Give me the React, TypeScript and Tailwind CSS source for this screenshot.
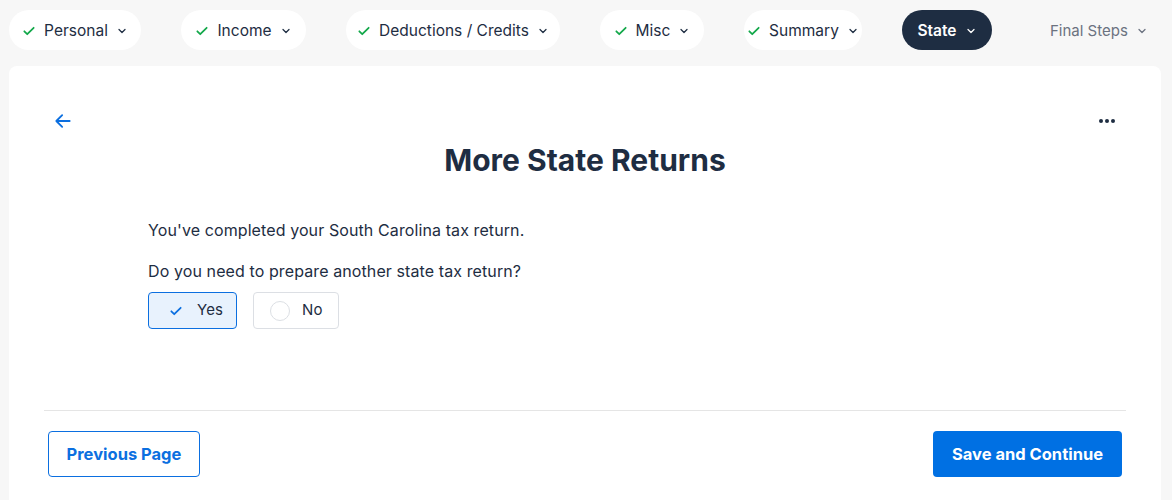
import React from "react";

const Check = ({ className = "" }: { className?: string }) => (
  <svg className={className} width="14" height="14" viewBox="0 0 24 24" fill="none" stroke="currentColor" strokeWidth="3" strokeLinecap="round" strokeLinejoin="round">
    <path d="M4 12.5l5 5L20 6.5" />
  </svg>
);

const Chevron = ({ className = "" }: { className?: string }) => (
  <svg className={className} width="12" height="12" viewBox="0 0 24 24" fill="none" stroke="currentColor" strokeWidth="2.5" strokeLinecap="round" strokeLinejoin="round">
    <path d="M6 9l6 6 6-6" />
  </svg>
);

const Tab = ({ label, w }: { label: string; w: string }) => (
  <div className={`flex items-center justify-center shrink-0 whitespace-nowrap h-10 pt-px rounded-full bg-white text-[15.5px] text-[#1e2d42] gap-2 ${w}`}>
    <Check className="text-[#13a84a]" />
    <span>{label}</span>
    <Chevron className="text-[#1e2d42]" />
  </div>
);

export default function App() {
  return (
    <div className="w-[1172px] h-[500px] bg-[#f7f7f7] overflow-hidden" style={{ fontFamily: "Inter, 'Noto Sans', sans-serif" }}>
      <div className="flex items-center pl-[9px] pt-[10px] gap-10 whitespace-nowrap">
        <Tab label="Personal" w="w-[132px]" />
        <Tab label="Income" w="w-[125px]" />
        <Tab label="Deductions / Credits" w="w-[214px]" />
        <Tab label="Misc" w="w-[104px]" />
        <Tab label="Summary" w="w-[118px]" />
        <div className="flex items-center justify-center shrink-0 w-[90px] h-10 pt-px rounded-full bg-[#1e2d42] text-white text-[15.5px] font-semibold gap-2">
          <span>State</span>
          <Chevron className="text-white" />
        </div>
        <div className="flex items-center shrink-0 gap-2 pt-0.5 text-[15px] text-[#6b7280] ml-[18px]">
          <span>Final Steps</span>
          <Chevron className="text-[#6b7280]" />
        </div>
      </div>
      <div className="mt-4 ml-[9px] w-[1152px] h-[440px] bg-white rounded-t-lg px-[35px] pt-[45px]">
        <div className="flex items-center justify-between px-[9px] h-5">
          <svg width="20" height="20" viewBox="0 0 24 24" fill="none" stroke="#0b6fe0" strokeWidth="2.2" strokeLinecap="round" strokeLinejoin="round">
            <path d="M20 12H4M11 5l-7 7 7 7" />
          </svg>
          <svg width="20" height="20" viewBox="0 0 20 20" fill="#1e2d42">
            <circle cx="4" cy="10" r="2" />
            <circle cx="10" cy="10" r="2" />
            <circle cx="16" cy="10" r="2" />
          </svg>
        </div>
        <h1 className="text-center text-[30px] font-bold text-[#1e2d42] mt-[9px] leading-[40px]">More State Returns</h1>
        <div className="pl-[104px] mt-[40px] text-[16px] tracking-[0.1px] text-[#1e2d42]">
          <p className="leading-5">You've completed your South Carolina tax return.</p>
          <p className="leading-5 mt-[21px]">Do you need to prepare another state tax return?</p>
          <div className="flex gap-4 mt-[11px]">
            <div className="flex items-center gap-[14px] h-[37px] w-[89px] pl-5 rounded border border-[#0b6fe0] bg-[#e8f2fd] text-[#1e2d42] text-[15px]">
              <Check className="text-[#0b6fe0]" />
              <span>Yes</span>
            </div>
            <div className="flex items-center gap-[12px] h-[37px] w-[86px] pl-4 rounded border border-[#dcdfe4] bg-white text-[#1e2d42] text-[15px]">
              <span className="w-5 h-5 rounded-full border border-[#dcdfe4]" />
              <span>No</span>
            </div>
          </div>
        </div>
        <div className="mt-[81px] border-t border-[#e5e5e5]" />
        <div className="flex justify-between items-center mt-5 px-1">
          <button className="h-[46px] w-[152px] rounded border border-[#0b6fe0] text-[#0b6fe0] font-bold text-[16.5px]">Previous Page</button>
          <button className="h-[46px] w-[189px] rounded bg-[#0070e3] text-white font-bold text-[16.5px]">Save and Continue</button>
        </div>
      </div>
    </div>
  );
}
